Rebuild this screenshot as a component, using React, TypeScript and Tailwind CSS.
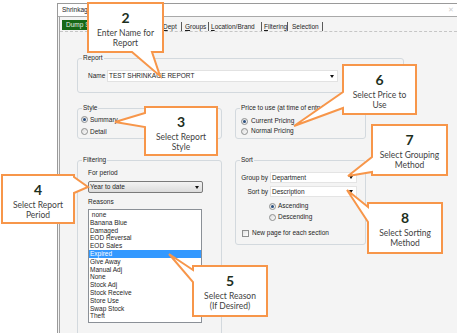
import React from "react";

function Radio({ checked }: { checked?: boolean }) {
  return (
    <span className="w-[7px] h-[7px] rounded-full border border-[#8e8f8f] bg-gradient-to-br from-[#dcdcdc] to-[#fbfbfb] flex items-center justify-center shrink-0">
      {checked && <span className="w-[3px] h-[3px] rounded-full bg-[#2b4f7e]" />}
    </span>
  );
}

function Arrow() {
  return (
    <span className="w-0 h-0 border-l-[2.5px] border-r-[2.5px] border-t-[3px] border-l-transparent border-r-transparent border-t-[#111]" />
  );
}

function Group({
  label,
  className,
  children,
}: {
  label: string;
  className: string;
  children: React.ReactNode;
}) {
  return (
    <fieldset className={"min-w-0 border border-[#d3d9de] rounded-[3px] " + className}>
      <legend className="ml-[4px] px-[1px] text-[6.5px] leading-[8px] text-[#1e1e1e] whitespace-nowrap">
        {label}
      </legend>
      {children}
    </fieldset>
  );
}

const reasons = [
  "\u00a0none",
  "Banana Blue",
  "Damaged",
  "EOD Reversal",
  "EOD Sales",
  "Expired",
  "Give Away",
  "Manual Adj",
  "None",
  "Stock Adj",
  "Stock Receive",
  "Store Use",
  "Swap Stock",
  "Theft",
];

type Callout = {
  n: string;
  l1: string;
  l2: string;
  x: number;
  y: number;
  w: number;
  h: number;
  d: string;
};

const callouts: Callout[] = [
  { n: "2", l1: "Enter Name for", l2: "Report", x: 88, y: 3, w: 75, h: 49, d: "M88,3 H163 V52 H152 L160,76 L132,52 H88 Z" },
  { n: "3", l1: "Select Report", l2: "Style", x: 145, y: 107, w: 72, h: 48, d: "M145,107 H217 V155 H145 V127 L115,122 L145,113 Z" },
  { n: "4", l1: "Select Report", l2: "Period", x: 2, y: 175, w: 72, h: 48, d: "M2,175 H74 V177 L88,187 L74,193 V223 H2 Z" },
  { n: "5", l1: "Select Reason", l2: "(If Desired)", x: 193, y: 266, w: 74, h: 50, d: "M193,266 H267 V316 H193 V282 L169,254 L193,270 Z" },
  { n: "6", l1: "Select Price to", l2: "Use", x: 343, y: 65, w: 73, h: 49, d: "M343,65 H416 V114 H343 V108 L294,126 L343,92 Z" },
  { n: "7", l1: "Select Grouping", l2: "Method", x: 372, y: 125, w: 75, h: 50, d: "M372,125 H447 V175 H372 V172 L348,176 L372,157 Z" },
  { n: "8", l1: "Select Sorting", l2: "Method", x: 368, y: 203, w: 74, h: 50, d: "M368,203 H442 V253 H368 V222 L347,190 L368,207 Z" },
];

export default function App() {
  return (
    <div className="relative w-[457px] h-[333px] overflow-hidden bg-white font-['Liberation_Sans',Arial,sans-serif] text-[#1e1e1e]">
      <div className="flex pt-[3px] h-full">
        <div className="w-[57px] shrink-0" />
        <div className="flex-1 flex flex-col border-l border-t border-[#9a9a9a]">
          {/* title bar */}
          <div className="h-[13px] bg-white border-b border-[#a9a9a9] pl-[4px] text-[6.5px] leading-[12px] whitespace-nowrap flex items-center justify-between pr-[3px]">
            <span>Shrinkage Report</span>
            <span className="text-[7px] text-[#d0d0d0]">✕</span>
          </div>
          {/* body */}
          <div className="flex-1 bg-[#f4f4f4] pl-[1px] flex">
            <div className="flex-1 border-l border-[#a3a3a3] flex flex-col">
              {/* tabs */}
              <div className="h-[15px] flex items-start pt-[3px] pl-[2px] border-b border-dashed border-[#c6c6c6] text-[6.5px] whitespace-nowrap">
                <div className="h-[10px] w-[46px] bg-[#166816] text-[#e3eee3] leading-[10px] pl-[4px] overflow-hidden">
                  Dump Screen
                </div>
                <div className="w-[52px] h-[9px] mt-[2px]" />
                <div className="w-[22px] h-[9px] mt-[2px] leading-[9px] pl-[3px] border-r border-[#5a5a5a]">
                  <span className="underline">D</span>ept
                </div>
                <div className="w-[27px] h-[9px] mt-[2px] leading-[9px] pl-[3px] border-r border-[#5a5a5a]">
                  <span className="underline">G</span>roups
                </div>
                <div className="w-[53px] h-[9px] mt-[2px] leading-[9px] pl-[2px] border-r border-[#5a5a5a]">
                  <span className="underline">L</span>ocation/Brand
                </div>
                <div className="w-[26px] h-[9px] mt-[2px] leading-[9px] pl-[2px] border-r border-[#5a5a5a]">
                  <span className="underline">F</span>iltering
                </div>
                <div className="w-[35px] h-[9px] mt-[2px] leading-[9px] pl-[4px] border-r border-[#5a5a5a]">
                  Selection
                </div>
              </div>

              {/* content */}
              <div className="pl-[17px] flex flex-col text-[6.5px]">
                {/* Report */}
                <Group label="Report" className="mt-[22px] w-[327px]">
                  <div className="mt-[8px] mb-[10px] pl-[10px] flex items-center h-[12px]">
                    <span className="w-[19px] leading-[12px]">Name</span>
                    <div className="w-[231px] h-[12px] bg-white border border-[#e2e2e2] flex items-center justify-between pl-[1px] pr-[3px]">
                      <span className="leading-[10px]">TEST SHRINKAGE REPORT</span>
                      <Arrow />
                    </div>
                  </div>
                </Group>

                {/* Style / Price */}
                <div className="mt-[11px] flex gap-[13px] items-stretch">
                  <Group label="Style" className="w-[145px]">
                    <div className="pl-[3px] pt-[2px] pb-[1px] flex flex-col">
                      <div className="h-[11px] flex items-center gap-[2px]">
                        <Radio checked />
                        <span className="leading-[10px]">Summary</span>
                      </div>
                      <div className="h-[11px] mt-[1px] flex items-center gap-[2px]">
                        <Radio />
                        <span className="leading-[10px]">Detail</span>
                      </div>
                    </div>
                  </Group>
                  <Group label="Price to use (at time of entry)" className="w-[131px]">
                    <div className="pl-[5px] pt-[4px] pb-[2px] flex flex-col">
                      <div className="h-[10px] flex items-center gap-[3px]">
                        <Radio checked />
                        <span className="leading-[10px]">Current Pricing</span>
                      </div>
                      <div className="h-[10px] flex items-center gap-[3px]">
                        <Radio />
                        <span className="leading-[10px]">Normal Pricing</span>
                      </div>
                    </div>
                  </Group>
                </div>

                {/* Filtering / Sort */}
                <div className="mt-[17px] flex gap-[13px] items-start">
                  <Group label="Filtering" className="w-[145px] pb-[30px]">
                    <div className="pl-[10px] flex flex-col">
                      <div className="mt-[5px] h-[8px] leading-[8px]">For period</div>
                      <div className="mt-[4px] w-[115px] h-[12px] rounded-[2px] border border-[#7a7a7a] bg-gradient-to-b from-[#f3f3f3] to-[#dcdcdc] flex items-center justify-between pl-[1px] pr-[3px]">
                        <span className="leading-[10px]">Year to date</span>
                        <Arrow />
                      </div>
                      <div className="mt-[5px] h-[8px] leading-[8px]">Reasons</div>
                      <div className="mt-[3px] w-[114px] h-[114px] bg-white border border-[#8b9097] pt-[1px] flex flex-col">
                        {reasons.map((r) => (
                          <div
                            key={r}
                            className={
                              r === "Expired"
                                ? "h-[7.8px] leading-[7.8px] pl-[1px] bg-[#3399ff] text-white"
                                : "h-[7.8px] leading-[7.8px] pl-[1px]"
                            }
                          >
                            {r}
                          </div>
                        ))}
                      </div>
                    </div>
                  </Group>

                  <Group label="Sort" className="w-[131px]">
                    <div className="pl-[5px] pb-[6px] flex flex-col">
                      <div className="mt-[8px] h-[11px] flex items-center">
                        <span className="w-[27px] text-right leading-[10px] whitespace-nowrap">Group by</span>
                        <div className="ml-[2px] w-[87px] h-[11px] bg-white border border-[#e4e4e4] flex items-center justify-between pl-[1px] pr-[3px]">
                          <span className="leading-[9px]">Department</span>
                          <Arrow />
                        </div>
                      </div>
                      <div className="mt-[3px] h-[11px] flex items-center">
                        <span className="w-[27px] text-right leading-[10px] whitespace-nowrap">Sort by</span>
                        <div className="ml-[2px] w-[87px] h-[11px] bg-white border border-[#e4e4e4] flex items-center justify-between pl-[1px] pr-[3px]">
                          <span className="leading-[9px]">Description</span>
                          <Arrow />
                        </div>
                      </div>
                      <div className="mt-[4px] ml-[28px] h-[10px] flex items-center gap-[2px]">
                        <Radio checked />
                        <span className="leading-[10px]">Ascending</span>
                      </div>
                      <div className="mt-[1px] ml-[28px] h-[10px] flex items-center gap-[2px]">
                        <Radio />
                        <span className="leading-[10px]">Descending</span>
                      </div>
                      <div className="mt-[6px] ml-[1px] h-[10px] flex items-center gap-[3px]">
                        <span className="w-[7px] h-[7px] border border-[#8e8f8f] bg-gradient-to-br from-[#e2e2e2] to-white shrink-0" />
                        <span className="leading-[10px]">New page for each section</span>
                      </div>
                    </div>
                  </Group>
                </div>
              </div>
            </div>
          </div>
        </div>
      </div>

      {/* callouts */}
      <svg className="absolute left-0 top-0 pointer-events-none" width="457" height="333" viewBox="0 0 457 333">
        {callouts.map((c) => (
          <path key={c.n} d={c.d} fill="#ffffff" stroke="#f7964a" strokeWidth="2" strokeLinejoin="miter" />
        ))}
      </svg>
      {callouts.map((c) => (
        <div
          key={c.n}
          className="absolute flex flex-col items-center pt-[6px] font-['Lato',sans-serif] text-[#3f3f3f] whitespace-nowrap"
          style={{ left: c.x, top: c.y, width: c.w, height: c.h }}
        >
          <div className="text-[14px] leading-[17px] font-bold text-[#1d2f1d]">{c.n}</div>
          <div className="mt-[2px] text-[8.5px] leading-[10px]">{c.l1}</div>
          <div className="text-[8.5px] leading-[10px]">{c.l2}</div>
        </div>
      ))}
    </div>
  );
}
